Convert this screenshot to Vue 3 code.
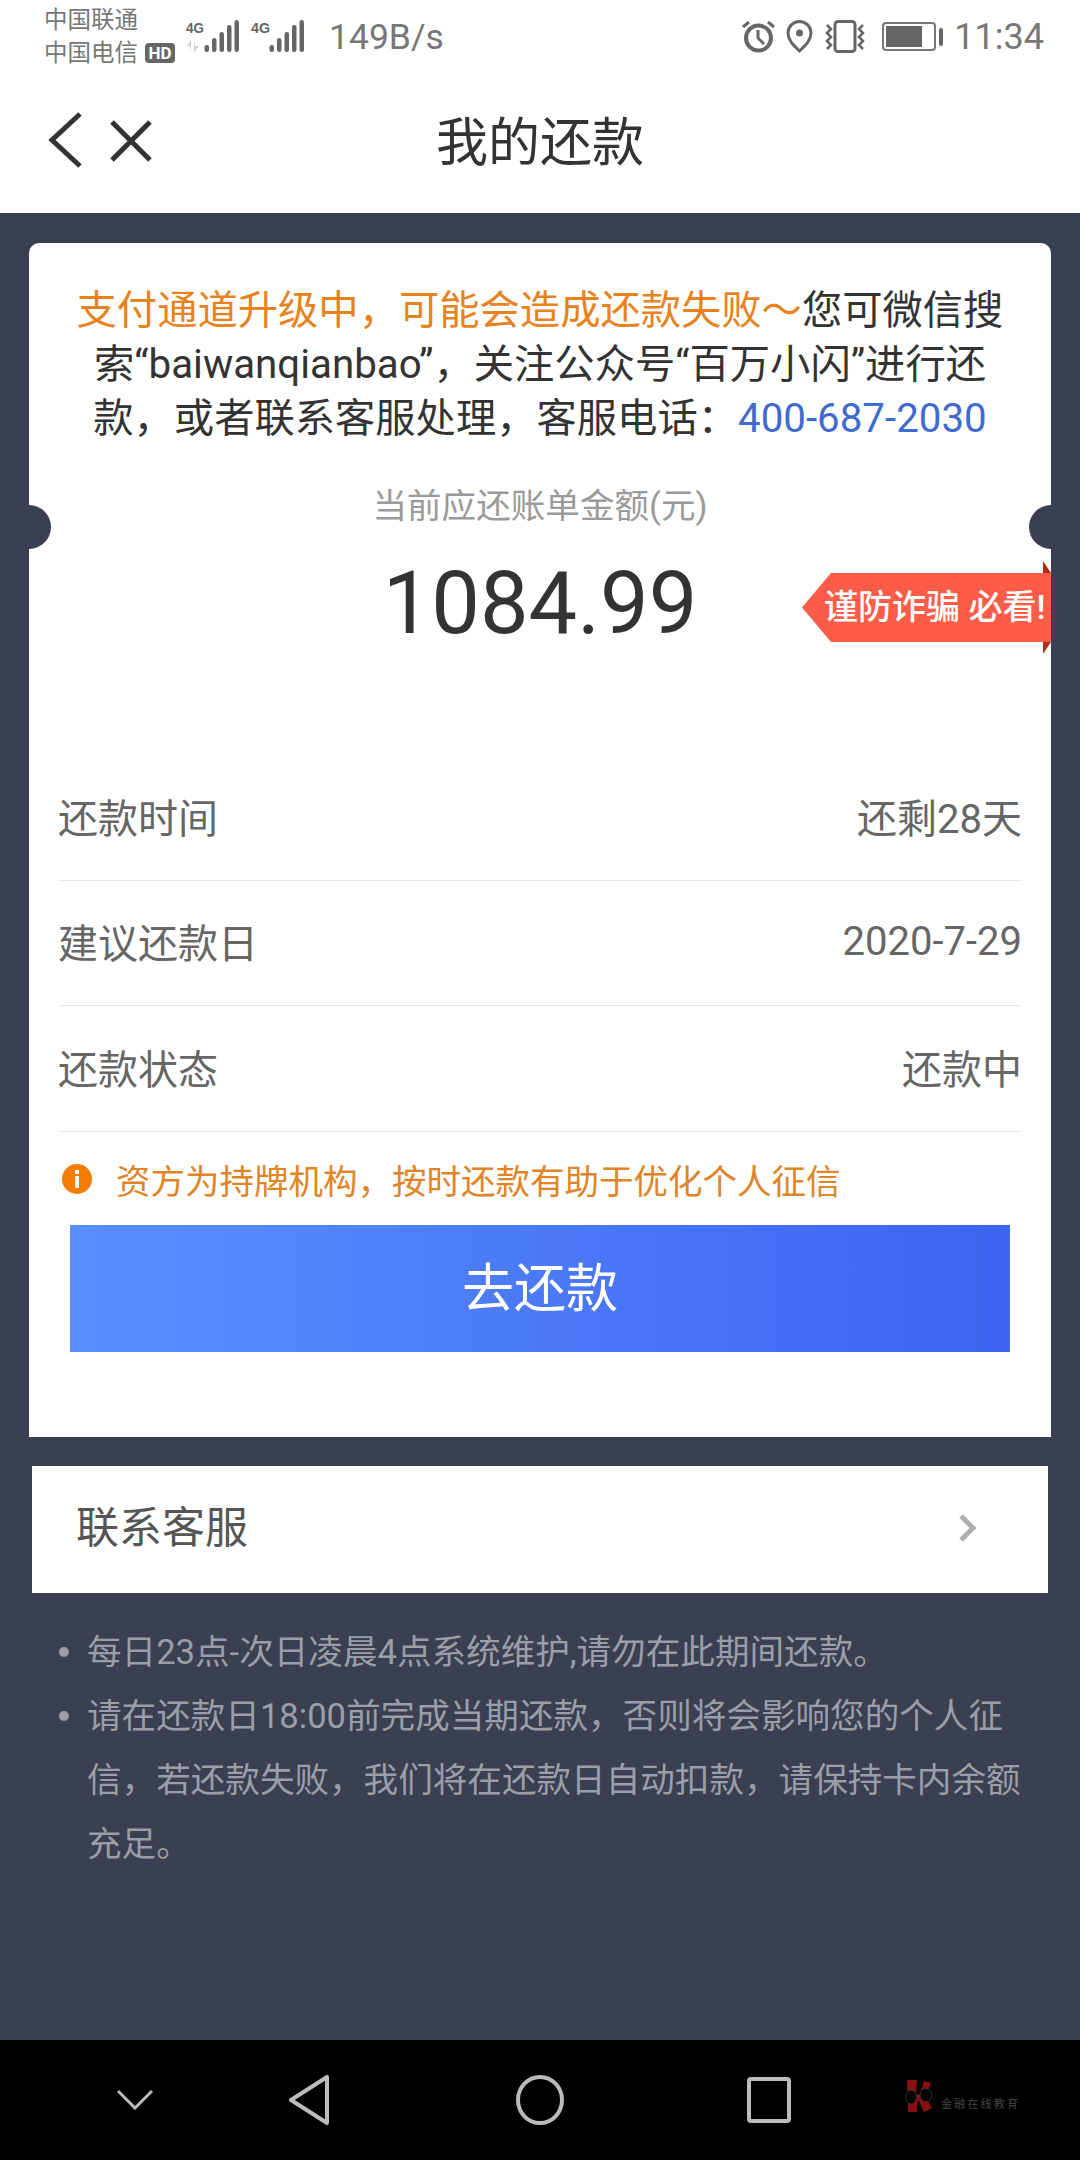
<template>
  <div class="page">
    <header class="top">
      <div class="status-bar">
        <div class="carriers">
          <span>中国联通</span>
          <span>中国电信</span>
        </div>
        <span class="hd">HD</span>
        <svg class="signal" width="120" height="33" viewBox="0 0 120 33">
          <text x="0" y="13" class="net" textLength="18" lengthAdjust="spacingAndGlyphs">4G</text>
          <text x="65" y="13" class="net" textLength="19" lengthAdjust="spacingAndGlyphs">4G</text>
          <path d="M5 32V20L1 26h3zM8 20v12l5-6H9z" fill="#cfcfcf" />
          <g fill="#666">
            <rect v-for="bar in bars" :key="bar.x" :x="bar.x" :y="bar.y" width="4.5" :height="32 - bar.y" rx="2.2" />
          </g>
        </svg>
        <span class="speed">149B/s</span>
        <div class="status-right">
          <svg width="35" height="33" viewBox="0 0 35 33" fill="none" stroke="#666">
            <circle cx="17.5" cy="18" r="12.5" stroke-width="4" />
            <path d="M17 10v8l6 6" stroke-width="3" />
            <path d="M2 7l6-5M33 7l-6-5" stroke-width="3" />
          </svg>
          <svg class="pin" width="27" height="33" viewBox="0 0 27 33" fill="none">
            <path d="M13.500 31C7 25 2 20 2 13a11.500 11.500 0 0 1 23 0c0 7-5 12-11.500 18z" stroke="#666" stroke-width="3" />
            <circle cx="13.500" cy="13" r="3.500" fill="#666" />
          </svg>
          <svg class="vibrate" width="42" height="33" viewBox="0 0 42 33" fill="none" stroke="#666">
            <rect x="11" y="1.500" width="20" height="30" rx="3" stroke-width="3" />
            <path d="M3 5l4 4-4 4 4 4-4 4 4 4-4 4M39 5l-4 4 4 4-4 4 4 4-4 4 4 4" stroke-width="2.500" />
          </svg>
          <div class="battery">
            <div class="battery-body"><div class="battery-fill"></div></div>
            <div class="battery-nub"></div>
          </div>
          <span class="time">11:34</span>
        </div>
      </div>
      <nav class="title-bar">
        <svg class="nav-icons" width="110" height="58" viewBox="0 0 110 58" fill="none" stroke="#333" stroke-width="5">
          <path d="M34 3L6 29l28 26" />
          <path d="M66 11l38 38M104 11L66 49" />
        </svg>
        <h1>我的还款</h1>
      </nav>
    </header>

    <main class="content">
      <section class="card">
        <span class="notch left"></span>
        <span class="notch right"></span>
        <div class="badge">
          <i class="fold up"></i>
          <i class="fold down"></i>
          <span>谨防诈骗 必看!</span>
        </div>

        <p class="notice">
          <span class="orange">支付通道升级中，可能会造成还款失败～</span>您可微信搜索“baiwanqianbao”，关注公众号“百万小闪”进行还款，或者联系客服处理，客服电话：<a href="#" class="tel">400-687-2030</a>
        </p>
        <p class="amount-label">当前应还账单金额(元)</p>
        <p class="amount">1084.99</p>

        <div class="rows">
          <div v-for="row in rows" :key="row.label" class="row">
            <span>{{ row.label }}</span>
            <span>{{ row.value }}</span>
          </div>
        </div>

        <div class="tip-line">
          <svg width="30" height="30" viewBox="0 0 30 30">
            <circle cx="15" cy="15" r="15" fill="#f57c00" />
            <rect x="13" y="6" width="4" height="4" fill="#fff" />
            <rect x="13" y="12" width="4" height="12" fill="#fff" />
          </svg>
          <span>资方为持牌机构，按时还款有助于优化个人征信</span>
        </div>
        <button class="pay-btn">去还款</button>
      </section>

      <a class="contact" href="#">
        <span>联系客服</span>
        <svg width="18" height="28" viewBox="0 0 18 28" fill="none" stroke="#b0b0b0" stroke-width="5">
          <path d="M2 2l12 12L2 26" />
        </svg>
      </a>

      <ul class="tips">
        <li>每日23点-次日凌晨4点系统维护,请勿在此期间还款。</li>
        <li>请在还款日18:00前完成当期还款，否则将会影响您的个人征信，若还款失败，我们将在还款日自动扣款，请保持卡内余额充足。</li>
      </ul>
    </main>

    <footer class="sys-nav">
      <svg class="i-down" width="36" height="20" viewBox="0 0 36 20" fill="none" stroke="#bbb" stroke-width="3">
        <path d="M1 1l17 17L35 1" />
      </svg>
      <svg class="i-back" width="42" height="50" viewBox="0 0 42 50" fill="none" stroke="#bbb" stroke-width="4" stroke-linejoin="round">
        <path d="M39 2v46L3 25z" />
      </svg>
      <svg class="i-home" width="48" height="50" viewBox="0 0 48 50" fill="none" stroke="#bbb" stroke-width="4">
        <ellipse cx="24" cy="25" rx="22" ry="23" />
      </svg>
      <svg class="i-recent" width="44" height="46" viewBox="0 0 44 46" fill="none" stroke="#bbb" stroke-width="4">
        <rect x="2" y="2" width="40" height="42" rx="2" />
      </svg>
      <div class="watermark">
        <svg width="30" height="32" viewBox="0 0 30 32">
          <path d="M2 0h10l-1 15 4-1 4-13 7 2-6 13 7 12-8 4-5-11-2 1v10H3z" fill="#8a1010" />
          <g fill="#050505" stroke="#3a3a3a" stroke-width="0.800">
            <ellipse cx="6" cy="17" rx="5.500" ry="7" />
            <ellipse cx="21" cy="15" rx="6" ry="6.500" />
          </g>
        </svg>
        <span>金融在线教育</span>
      </div>
    </footer>
  </div>
</template>

<script setup>
const rows = [
  { label: '还款时间', value: '还剩28天' },
  { label: '建议还款日', value: '2020-7-29' },
  { label: '还款状态', value: '还款中' }
]

// signal bars of both SIM cards, same steps
const tops = [25, 18, 12, 5, 0]
const bars = [
  ...tops.map((y, i) => ({ x: 18.5 + i * 7.5, y })),
  ...tops.map((y, i) => ({ x: 83.5 + i * 7.5, y }))
]
</script>

<style scoped>
.page {
  width: 1080px;
  height: 2160px;
  display: flex;
  flex-direction: column;
  background: #3a3f51;
  font-family: Roboto, "Noto Sans CJK SC", sans-serif;
  color: #333;
}

.top {
  background: #fff;
}

.status-bar {
  height: 70px;
  display: flex;
  align-items: flex-start;
  padding: 0 36px 0 44px;
  color: #777;
}

.carriers {
  display: flex;
  flex-direction: column;
  font-size: 23.5px;
  line-height: 33px;
  padding-top: 4px;
  width: 101px;
}

.hd {
  margin-top: 43px;
  width: 30px;
  height: 20px;
  line-height: 20px;
  border-radius: 4px;
  background: #666;
  color: #fff;
  font-size: 17px;
  font-weight: 700;
  text-align: center;
}

.signal {
  margin: 20px 0 0 11px;
}

.net {
  font-family: "Liberation Sans", sans-serif;
  font-size: 15px;
  font-weight: 700;
  fill: #666;
}

.speed {
  margin: 15px 0 0 23px;
  font-size: 35.5px;
  line-height: 44px;
}

.status-right {
  margin-left: auto;
  display: flex;
  align-items: flex-start;
  padding-top: 20px;
}

.pin {
  margin-left: 10px;
}

.vibrate {
  margin-left: 11px;
}

.battery {
  display: flex;
  align-items: center;
  margin: 2px 0 0 16px;
}

.battery-body {
  width: 54px;
  height: 29px;
  box-sizing: border-box;
  border: 2px solid #777;
  border-radius: 4px;
  padding: 2px;
}

.battery-fill {
  width: 36px;
  height: 21px;
  background: #666;
}

.battery-nub {
  width: 4px;
  height: 18px;
  margin-left: 3px;
  border-radius: 2px;
  background: #666;
}

.time {
  margin: -5px 0 0 11px;
  font-size: 36px;
  line-height: 44px;
}

.title-bar {
  height: 143px;
  display: flex;
  align-items: center;
  justify-content: center;
  position: relative;
}

.nav-icons {
  position: absolute;
  left: 46px;
  top: 41px;
}

h1 {
  margin: 5px 0 0;
  font-size: 52px;
  font-weight: 400;
  line-height: 70px;
  color: #333;
}

.content {
  flex: 1;
  padding: 30px 29px 0;
}

.card {
  position: relative;
  height: 1194px;
  box-sizing: border-box;
  padding: 41px 29px 0;
  background: #fff;
  border-radius: 10px 10px 0 0;
  overflow: hidden;
}

.notch {
  position: absolute;
  top: 262px;
  width: 44px;
  height: 44px;
  border-radius: 50%;
  background: #3a3f51;
}

.notch.left {
  left: -22px;
}

.notch.right {
  right: -22px;
}

.badge {
  position: absolute;
  top: 318px;
  right: 0;
  width: 249px;
  height: 93px;
}

.badge span {
  position: absolute;
  top: 12px;
  left: 0;
  right: 0;
  height: 69px;
  line-height: 69px;
  box-sizing: border-box;
  padding-left: 22px;
  background: #fd5d48;
  color: #fff;
  font-size: 34px;
  font-weight: 500;
  white-space: nowrap;
  clip-path: polygon(29px 0, 100% 0, 100% 100%, 29px 100%, 0 50%);
}

.fold {
  position: absolute;
  right: 0;
  width: 8px;
  height: 12px;
  background: #b32c12;
}

.fold.up {
  top: 0;
  clip-path: polygon(0 0, 100% 100%, 0 100%);
}

.fold.down {
  bottom: 0;
  clip-path: polygon(0 0, 100% 0, 0 100%);
}

.notice {
  margin: 0;
  padding: 0 6px;
  font-size: 40.3px;
  line-height: 54px;
  text-align: center;
  color: #333;
}

.orange {
  color: #e8821e;
}

.tel {
  color: #3f6bd0;
  text-decoration: none;
}

.amount-label {
  margin: 36px 0 0;
  font-size: 34.6px;
  line-height: 48px;
  text-align: center;
  color: #9a9a9a;
}

.amount {
  margin: 24px 0 0;
  font-size: 86.5px;
  line-height: 100px;
  text-align: center;
  color: #333;
}

.rows {
  margin-top: 101px;
}

.row {
  height: 125.5px;
  box-sizing: border-box;
  display: flex;
  align-items: center;
  justify-content: space-between;
  padding-bottom: 3px;
  border-bottom: 1px solid #e8e8e8;
  font-size: 40px;
  color: #666;
}

.tip-line {
  display: flex;
  align-items: center;
  height: 48px;
  margin: 23px 0 0 4px;
  font-size: 34.5px;
  color: #e08428;
}

.tip-line span {
  margin-left: 24px;
}

.pay-btn {
  display: block;
  width: 940px;
  height: 127px;
  margin: 22px 0 0 12px;
  padding: 0 0 8px;
  border: none;
  background: linear-gradient(90deg, #5a8fff, #3c64f0);
  color: #fff;
  font-family: inherit;
  font-size: 52px;
}

.contact {
  height: 127px;
  margin: 29px 3px 0;
  padding: 0 71px 12px 44px;
  box-sizing: border-box;
  display: flex;
  align-items: center;
  justify-content: space-between;
  background: #fff;
  color: #555;
  font-size: 43px;
  text-decoration: none;
}

.contact svg {
  margin-top: 9px;
}

.tips {
  list-style: none;
  margin: 27px 0 0;
  padding: 0 30px 0 58px;
  font-size: 34.6px;
  line-height: 64px;
  color: #9a9ea9;
}

.tips li {
  position: relative;
}

.tips li::before {
  content: "";
  position: absolute;
  left: -28px;
  top: 27px;
  width: 10px;
  height: 10px;
  border-radius: 50%;
  background: #9a9ea9;
}

.sys-nav {
  height: 120px;
  flex: none;
  display: flex;
  align-items: center;
  padding-left: 117px;
  background: #000;
}

.i-back {
  margin-left: 135px;
}

.i-home {
  margin-left: 186px;
}

.i-recent {
  margin-left: 183px;
}

.watermark {
  display: flex;
  align-items: flex-end;
  margin-left: 114px;
  margin-top: -8px;
  color: #454545;
  font-size: 11px;
  letter-spacing: 2.2px;
}

.watermark span {
  margin-left: 6px;
  line-height: 14px;
}
</style>
